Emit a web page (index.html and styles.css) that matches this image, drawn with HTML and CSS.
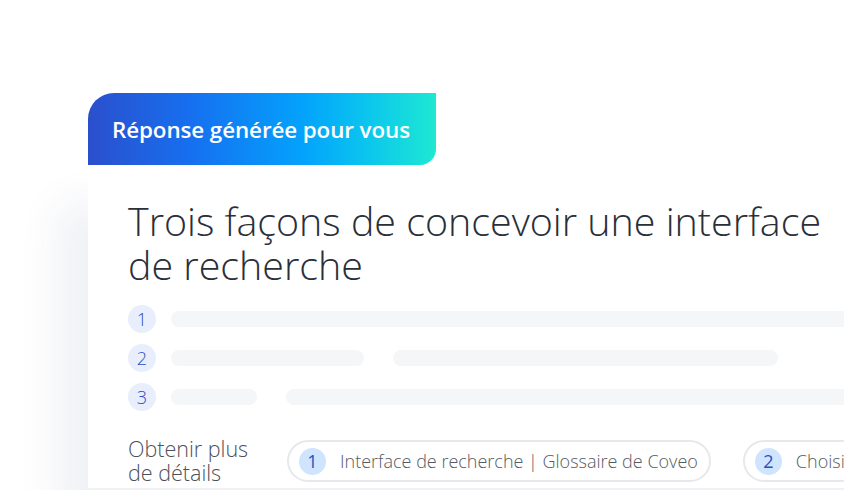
FILE: index.html
```html
<!DOCTYPE html>
<html lang="fr">
<head>
<meta charset="utf-8">
<link rel="stylesheet" href="styles.css">
</head>
<body>
<div class="stage">
  <div class="tab">Réponse générée pour vous</div>
  <div class="card">
    <h1 class="title">Trois façons de concevoir une interface de recherche</h1>
    <ol class="steps">
      <li class="step"><span class="num">1</span><span class="bar" style="width:700px"></span></li>
      <li class="step"><span class="num">2</span><span class="bar" style="width:193px"></span><span class="bar" style="width:385px"></span></li>
      <li class="step"><span class="num">3</span><span class="bar" style="width:86px"></span><span class="bar" style="width:600px"></span></li>
    </ol>
    <div class="more">
      <div class="more-label">Obtenir plus<br>de détails</div>
      <div class="chips">
        <div class="chip"><span class="chip-num">1</span><span class="chip-text">Interface de recherche | Glossaire de Coveo</span></div>
        <div class="chip"><span class="chip-num">2</span><span class="chip-text">Choisir une interface</span></div>
      </div>
    </div>
  </div>
</div>
</body>
</html>
```

FILE: styles.css
```css
html, body {
  margin: 0;
  padding: 0;
  background: #ffffff;
  overflow: hidden;
  width: 844px;
  height: 490px;
}
body {
  font-family: "Open Sans", "Noto Sans", sans-serif;
}
.stage {
  padding: 93px 0 0 88px;
  width: 900px;
}
.tab {
  width: 348px;
  height: 72px;
  box-sizing: border-box;
  padding: 0 0 0 24px;
  display: flex;
  align-items: center;
  color: #ffffff;
  font-size: 22.4px;
  font-weight: 600;
  letter-spacing: -0.1px;
  border-radius: 26px 0 16px 0;
  background: linear-gradient(90deg, #2b4fcd 0%, #1670f0 30%, #03a3fc 62%, #0bc5ee 80%, #1ee8d2 100%);
}
.card {
  width: 860px;
  height: 323px;
  background: #ffffff;
  box-sizing: border-box;
  padding: 34px 0 0 40px;
  box-shadow: -30px 40px 40px rgba(40, 60, 110, 0.07);
  overflow: hidden;
}
.title {
  margin: 0;
  font-weight: 300;
  font-size: 39.4px;
  line-height: 44px;
  color: #2a2f3a;
  width: 716px;
}
.steps {
  list-style: none;
  margin: 18px 0 0 0;
  padding: 0;
  display: flex;
  flex-direction: column;
  gap: 11px;
}
.step {
  display: flex;
  align-items: center;
  gap: 15px;
  height: 28px;
}
.step .bar + .bar {
  margin-left: 14px;
}
.num {
  width: 28px;
  height: 28px;
  border-radius: 50%;
  background: #e9eefc;
  color: #2a4cc4;
  font-size: 18px;
  font-weight: 300;
  display: flex;
  align-items: center;
  justify-content: center;
  flex: none;
}
.bar {
  height: 16px;
  border-radius: 8px;
  background: #f5f6f7;
  flex: none;
}
.more {
  margin-top: 26px;
  display: flex;
  align-items: center;
  gap: 37px;
}
.more-label {
  font-size: 21.5px;
  font-weight: 300;
  line-height: 24px;
  color: #4b505a;
  width: 122px;
  flex: none;
  white-space: nowrap;
}
.chips {
  display: flex;
  gap: 32px;
}
.chip {
  flex: none;
  height: 42px;
  box-sizing: border-box;
  border: 2px solid #e6e8eb;
  border-radius: 21px;
  display: flex;
  align-items: center;
  padding: 0 11px 0 10px;
  gap: 14px;
}
.chip-num {
  width: 27px;
  height: 27px;
  border-radius: 50%;
  background: #cfe4ff;
  color: #2552c8;
  font-size: 18px;
  font-weight: 400;
  display: flex;
  align-items: center;
  justify-content: center;
}
.chip-text {
  font-size: 18px;
  font-weight: 300;
  color: #555a63;
  white-space: nowrap;
}
```
